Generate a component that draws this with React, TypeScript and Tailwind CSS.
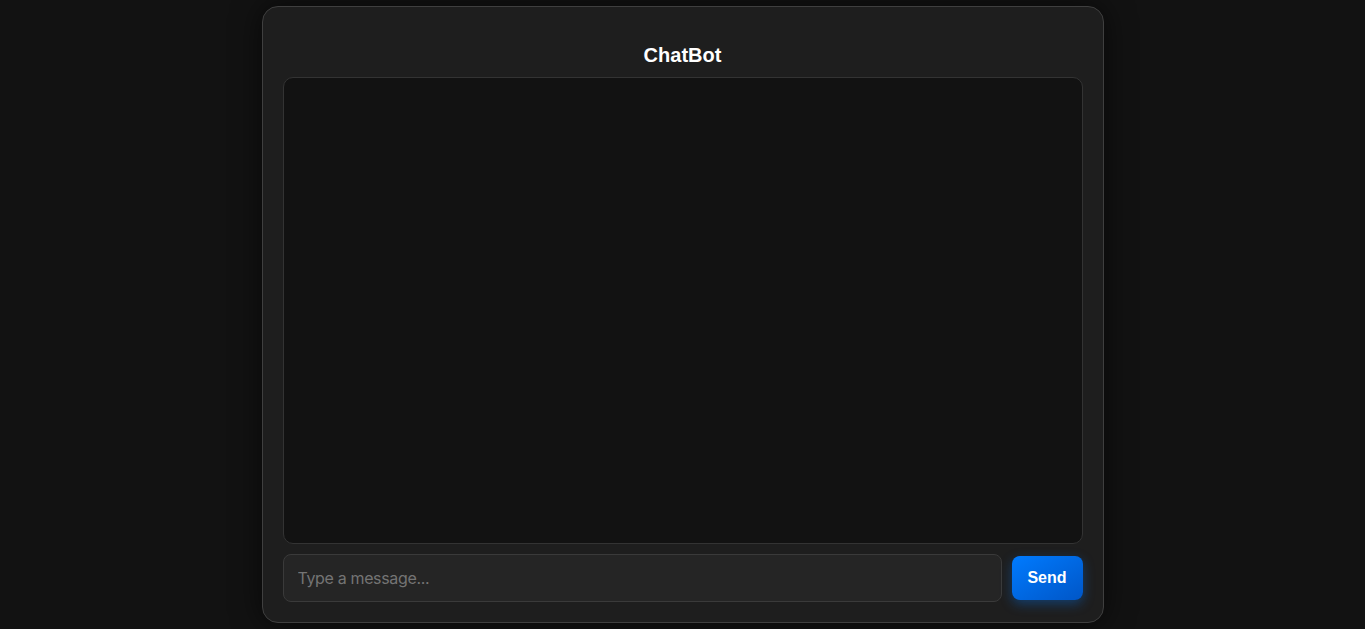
export default function App() {
    return (
        <div className="min-h-screen bg-[#121212] flex justify-center pt-[6px] font-['Liberation_Sans',Arial,sans-serif]">
            <div className="w-[842px] h-[617px] flex flex-col bg-[#1e1e1e] border border-[#3f3f3f] rounded-[16px] px-[20px] pb-[20px] shadow-[0_0_30px_rgba(0,0,0,0.6)]">
                <h2 className="text-white text-[20px] font-bold text-center leading-[28px] mt-[34px] mb-[8px]">ChatBot</h2>
                <div className="flex-1 bg-[#121212] border border-[#333333] rounded-[10px]"></div>
                <div className="flex items-center gap-[10px] mt-[10px]">
                    <input
                        type="text"
                        placeholder="Type a message..."
                        className="flex-1 h-[48px] px-[14px] bg-[#252525] border border-[#3a3a3a] rounded-[8px] text-white text-[16px] tracking-[-0.35px] font-['Inter',sans-serif] placeholder:text-[#747474] outline-none"
                    />
                    <button className="w-[71px] h-[44px] rounded-[8px] text-white text-[16px] font-bold bg-gradient-to-br from-[#007bff] to-[#0056c7] shadow-[0_4px_12px_rgba(0,123,255,0.35)]">
                        Send
                    </button>
                </div>
            </div>
        </div>
    )
}
